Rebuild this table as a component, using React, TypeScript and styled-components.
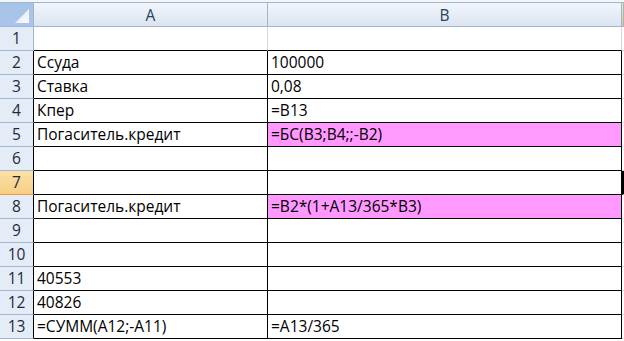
import styled, { createGlobalStyle } from 'styled-components'

const GlobalStyle = createGlobalStyle`
    html, body {
        margin: 0;
        padding: 0;
        background: #ffffff;
    }
    body {
        font-family: 'Open Sans', 'Liberation Sans', sans-serif;
    }
`

type Row = { n: number; a?: string; b?: string; pink?: boolean; boxed?: boolean }

const rows: Row[] = [
    { n: 1 },
    { n: 2, a: 'Ссуда', b: '100000', boxed: true },
    { n: 3, a: 'Ставка', b: '0,08', boxed: true },
    { n: 4, a: 'Кпер', b: '=B13', boxed: true },
    { n: 5, a: 'Погаситель.кредит', b: '=БС(B3;B4;;-B2)', pink: true, boxed: true },
    { n: 6, boxed: true },
    { n: 7, boxed: true },
    { n: 8, a: 'Погаситель.кредит', b: '=B2*(1+A13/365*B3)', pink: true, boxed: true },
    { n: 9, boxed: true },
    { n: 10, boxed: true },
    { n: 11, a: '40553', boxed: true },
    { n: 12, a: '40826', boxed: true },
    { n: 13, a: '=СУММ(A12;-A11)', b: '=A13/365', boxed: true },
]

const ACTIVE_ROW = 7

export default function App() {
    return (
        <>
            <GlobalStyle />
            <TopStrip />
            <Sheet>
                <Corner>
                    <svg width="33" height="23" viewBox="0 0 33 23">
                        <defs>
                            <linearGradient id="tri" x1="0" y1="0" x2="1" y2="1">
                                <stop offset="0" stopColor="#dfe6ef" />
                                <stop offset="1" stopColor="#f9fbfd" />
                            </linearGradient>
                        </defs>
                        <polygon points="15,20 29,6 29,20" fill="url(#tri)" />
                    </svg>
                </Corner>
                <ColHeader>A</ColHeader>
                <ColHeader>B</ColHeader>
                <ColHeader $selected />

                {rows.map((r) => (
                    <RowGroup key={r.n}>
                        <RowHeader $active={r.n === ACTIVE_ROW} $boxed={r.boxed}>
                            {r.n}
                        </RowHeader>
                        <Cell $boxed={r.boxed}>{r.a}</Cell>
                        <Cell $boxed={r.boxed} $pink={r.pink}>
                            {r.b}
                        </Cell>
                        <Edge $active={r.n === ACTIVE_ROW} />
                    </RowGroup>
                ))}
            </Sheet>
        </>
    )
}

const TopStrip = styled.div`
    height: 2px;
    background: #f3f5f8;
    border-bottom: 1px solid #9eb6ce;
`

const Sheet = styled.div`
    display: grid;
    grid-template-columns: 34px 234px 354px 1fr;
    grid-auto-rows: 24px;
`

const RowGroup = styled.div`
    display: contents;
`

const Corner = styled.div`
    box-sizing: border-box;
    border-right: 1px solid #9eb6ce;
    border-bottom: 1px solid #9eb6ce;
    background: #a9c4e9;
    svg {
        display: block;
    }
`

const ColHeader = styled.div<{ $selected?: boolean }>`
    box-sizing: border-box;
    border-right: 1px solid #9eb6ce;
    border-bottom: 1px solid #9eb6ce;
    background: ${(p) =>
        p.$selected
            ? 'linear-gradient(#fbe3b4, #f4c36b)'
            : 'linear-gradient(#f2f6fb, #dbe4f0)'};
    display: flex;
    align-items: center;
    justify-content: center;
    font-size: 15.5px;
    color: #27415f;
`

const RowHeader = styled.div<{ $active?: boolean; $boxed?: boolean }>`
    box-sizing: border-box;
    border-right: 1px solid ${(p) => (p.$boxed ? '#000000' : '#9eb6ce')};
    border-bottom: 1px solid ${(p) => (p.$active ? '#f29436' : '#9eb6ce')};
    background: ${(p) =>
        p.$active ? 'linear-gradient(#fbe0a8, #f7cf85)' : '#e4ecf7'};
    display: flex;
    align-items: flex-end;
    justify-content: center;
    padding-bottom: 1px;
    font-size: 15.5px;
    color: #1d2b3a;
`

const Cell = styled.div<{ $boxed?: boolean; $pink?: boolean }>`
    box-sizing: border-box;
    border-right: 1px solid ${(p) => (p.$boxed ? '#000000' : '#d0d7e5')};
    border-bottom: 1px solid #000000;
    background: ${(p) => (p.$pink ? '#ff99ff' : '#ffffff')};
    display: flex;
    align-items: flex-end;
    padding: 0 3px 1px 3px;
    font-size: 15.5px;
    color: #000000;
    white-space: nowrap;
    overflow: hidden;
`

const Edge = styled.div<{ $active?: boolean }>`
    box-sizing: border-box;
    border-bottom: 1px solid #d0d7e5;
    border-left: ${(p) => (p.$active ? '2px solid #000000' : 'none')};
    background: #ffffff;
`
